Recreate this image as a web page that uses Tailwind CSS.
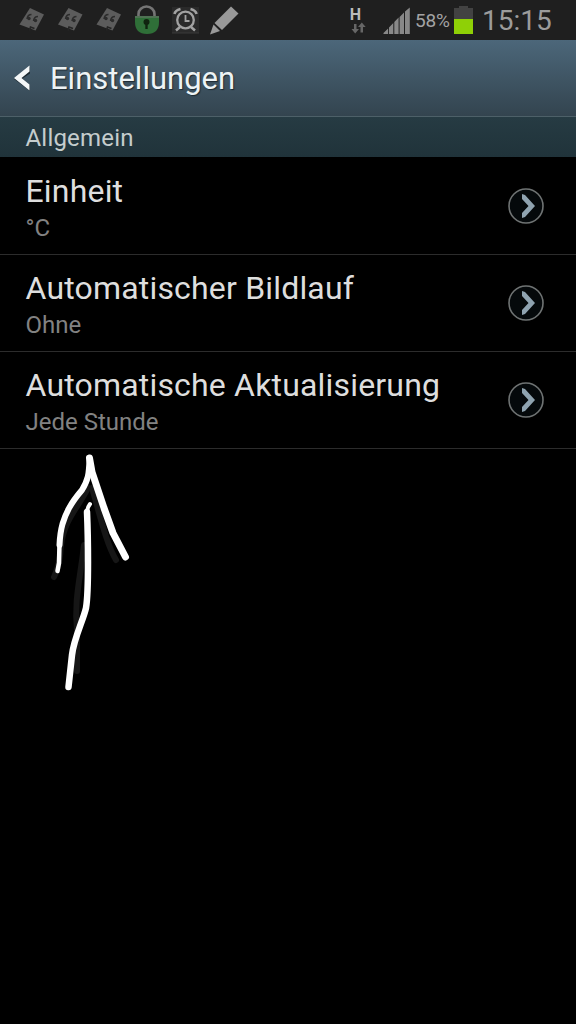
<!DOCTYPE html>
<html lang="de">
<head>
    <meta charset="UTF-8">
    <meta name="viewport" content="width=device-width, initial-scale=1.0">
    <title>Einstellungen</title>
    <script src="https://cdn.jsdelivr.net/npm/@tailwindcss/browser@4"></script>
</head>
<body class="bg-black h-screen overflow-hidden font-[Roboto,sans-serif]">

    <!-- Status bar -->
    <div class="h-10 bg-[#1f1f1f] flex items-center justify-between pl-[18px] pr-[23px]">
        <div class="flex items-center">
            <svg class="w-[116px] h-10" viewBox="0 0 116 40">
                <defs>
                    <g id="note">
                        <path d="M12 8L26 14.500L17.500 30.500L1.500 24.500Z" fill="#5c5c5c"/>
                        <path d="M13.500 14.500q-4 0-4.500 4.500M20 16.500q-4 0-4.500 4.500" fill="none" stroke="#2c2c2c" stroke-width="1.500"/>
                        <circle cx="11" cy="18.500" r="1.700" fill="#2c2c2c"/>
                        <circle cx="17.500" cy="20.500" r="1.700" fill="#2c2c2c"/>
                        <path d="M11.500 30.500l1-3.500 4 1.500" fill="none" stroke="#252525" stroke-width="1.600"/>
                    </g>
                </defs>
                <use href="#note"/>
                <use href="#note" x="38.5"/>
                <use href="#note" x="77"/>
            </svg>
            <svg class="w-[26px] h-10" viewBox="134 0 26 40">
                <path d="M138.500 17v-3a8 7.500 0 0 1 16 0v3" fill="none" stroke="#757575" stroke-width="2.600"/>
                <path d="M135 16h24v6q0 12-12 12t-12-12z" fill="#2f6f38"/>
                <path d="M135 16h24v2h-24z" fill="#4f7153"/>
                <circle cx="146.500" cy="22" r="3" fill="#10240f"/>
                <path d="M145.300 23h2.400v6h-2.400z" fill="#10240f"/>
            </svg>
            <svg class="w-[28px] h-10 ml-3" viewBox="172 0 28 40">
                <path d="M172 7h27v26h-27z" fill="#2a2a2a"/>
                <path d="M172 33h27" stroke="#3a3a3a"/>
                <circle cx="185.500" cy="20" r="8.300" fill="none" stroke="#a2a2a2" stroke-width="2.300"/>
                <path d="M185.500 15v6h4" fill="none" stroke="#a2a2a2" stroke-width="1.800"/>
                <path d="M174.500 14q0.500-3.500 6-5M196.500 14q-0.500-3.500-6-5" fill="none" stroke="#a2a2a2" stroke-width="2.600"/>
                <path d="M180 27l-4 3.500M191 27l4 3.500" stroke="#a2a2a2" stroke-width="2.500"/>
            </svg>
            <svg class="w-[30px] h-10 ml-[9px]" viewBox="209 0 30 40">
                <path d="M231 6.500L238.500 13.500L222 30L214.500 23Z" fill="#999"/>
                <path d="M213.500 24.500L220 31L210 34.500Z" fill="#999"/>
            </svg>
        </div>
        <div class="flex items-center">
            <div class="w-[18px] h-10 flex flex-col items-center pt-2">
                <span class="text-[16px] leading-[14px] font-bold text-[#bcbcbc] mr-[3px]">H</span>
                <svg class="w-[15px] h-[13px] ml-[2px]" viewBox="0 0 15 13">
                    <path d="M3 2h2.500v5H8L4.200 11.500L0.500 7H3zM9.500 10.500H12V5h2.700L10.800 0.500L7 5h2.500z" fill="#666"/>
                </svg>
            </div>
            <svg class="w-[27px] h-10 ml-[17px]" viewBox="383 0 27 40">
                <path d="M383.500 34v-1l4.600-4.500V34zM389 34V27.500l4.300-4.500V34zM394.300 34V22l4.300-4.500V34zM399.600 34V17l4.400-4.500V34zM405 34V11.500L409.800 7.500V34z" fill="#888"/>
            </svg>
            <span class="text-[19px] tracking-[-0.2px] text-[#a3a3a3] ml-[5px] w-9 whitespace-nowrap pt-[2px]">58%</span>
            <svg class="w-[19px] h-10 ml-[3px]" viewBox="454 0 19 40">
                <path d="M454 8h5V6h9v2h5v11h-19z" fill="#424242"/>
                <path d="M454 19h19v15h-19z" fill="#8fd006"/>
            </svg>
            <span class="text-[28px] text-[#9c9c9c] ml-[9px] w-[71px] whitespace-nowrap pt-[1px]">15:15</span>
        </div>
    </div>

    <!-- Action bar -->
    <div class="h-[77px] flex items-center pl-[14px] bg-linear-to-b from-[#4c677a] to-[#33444f] border-b border-[#4d6068]">
        <svg class="w-4 h-[26px]" viewBox="0 0 16 26">
            <path d="M16 2v6.500L8.500 13.500L16 20v6L0 14z" fill="#1d2a32"/>
            <path d="M15.500 0.500v6L7.500 13L15.500 19.500v6L0 13z" fill="#f4f7f8"/>
        </svg>
        <h1 class="text-[31px] leading-9 text-[#edf3f5] ml-5 pt-[2px] whitespace-nowrap [text-shadow:1px_1px_1px_#1d2a32]">Einstellungen</h1>
    </div>

    <h2 class="h-10 leading-[42px] pl-[25.5px] text-2xl text-[#c5cdcd] bg-linear-to-b from-[#263b43] to-[#20333a] tracking-[0.2px]">Allgemein</h2>

    <!-- Settings list -->
    <ul>
        <li class="h-[98px] flex items-center justify-between pl-[25.5px] pr-8 border-b border-[#2c2c2c]">
            <div class="whitespace-nowrap pt-1">
                <p class="text-[32px] leading-10 text-[#dedede] tracking-[0.18px]">Einheit</p>
                <p class="text-2xl leading-[34px] text-[#828282]">°C</p>
            </div>
            <svg class="w-9 h-9" viewBox="0 0 36 36">
                <circle cx="18" cy="18" r="17" fill="#05090b" stroke="#6f7373" stroke-width="1.600"/>
                <path d="M14 6v5L20.500 18L14 25v5l3-1L27 18L17 7z" fill="#8fa3b0"/>
            </svg>
        </li>
        <li class="h-[97px] flex items-center justify-between pl-[25.5px] pr-8 border-b border-[#2c2c2c]">
            <div class="whitespace-nowrap pt-[3px]">
                <p class="text-[32px] leading-10 text-[#dedede] tracking-[0.18px]">Automatischer Bildlauf</p>
                <p class="text-2xl leading-[34px] text-[#828282]">Ohne</p>
            </div>
            <svg class="w-9 h-9" viewBox="0 0 36 36">
                <circle cx="18" cy="18" r="17" fill="#05090b" stroke="#6f7373" stroke-width="1.600"/>
                <path d="M14 6v5L20.500 18L14 25v5l3-1L27 18L17 7z" fill="#8fa3b0"/>
            </svg>
        </li>
        <li class="h-[97px] flex items-center justify-between pl-[25.5px] pr-8 border-b border-[#2c2c2c]">
            <div class="whitespace-nowrap pt-[3px]">
                <p class="text-[32px] leading-10 text-[#dedede] tracking-[0.18px]">Automatische Aktualisierung</p>
                <p class="text-2xl leading-[34px] text-[#828282]">Jede Stunde</p>
            </div>
            <svg class="w-9 h-9" viewBox="0 0 36 36">
                <circle cx="18" cy="18" r="17" fill="#05090b" stroke="#6f7373" stroke-width="1.600"/>
                <path d="M14 6v5L20.500 18L14 25v5l3-1L27 18L17 7z" fill="#8fa3b0"/>
            </svg>
        </li>
    </ul>

    <!-- Hand drawn arrow -->
    <svg class="w-[120px] h-[250px] ml-[30px]" viewBox="30 449 120 250" fill="none" stroke-linecap="round" stroke-linejoin="round">
        <g stroke="#161616" stroke-width="6">
            <path d="M88 488C78 508 65 518 61 545Q60 565 54 577"/>
            <path d="M92 488C100 515 106 543 116 560"/>
            <path d="M84 545C80 580 74 600 77 630V671"/>
        </g>
        <g stroke="#fff">
            <path d="M89.500 459C89 475 88 480 82 490C70 504 66 513 62.500 524Q60 533 59.500 545" stroke-width="6"/>
            <path d="M59.500 543L59 563L57.500 571" stroke-width="4.500"/>
            <path d="M89.500 458L92 472L104 508L113 533L125.500 557" stroke-width="7"/>
            <path d="M90 504Q87 508 87 513" stroke-width="4"/>
            <path d="M87 512C88 535 89 590 86 608C83 621 74 638 72 655L68.500 687" stroke-width="6.500"/>
        </g>
    </svg>

</body>
</html>
